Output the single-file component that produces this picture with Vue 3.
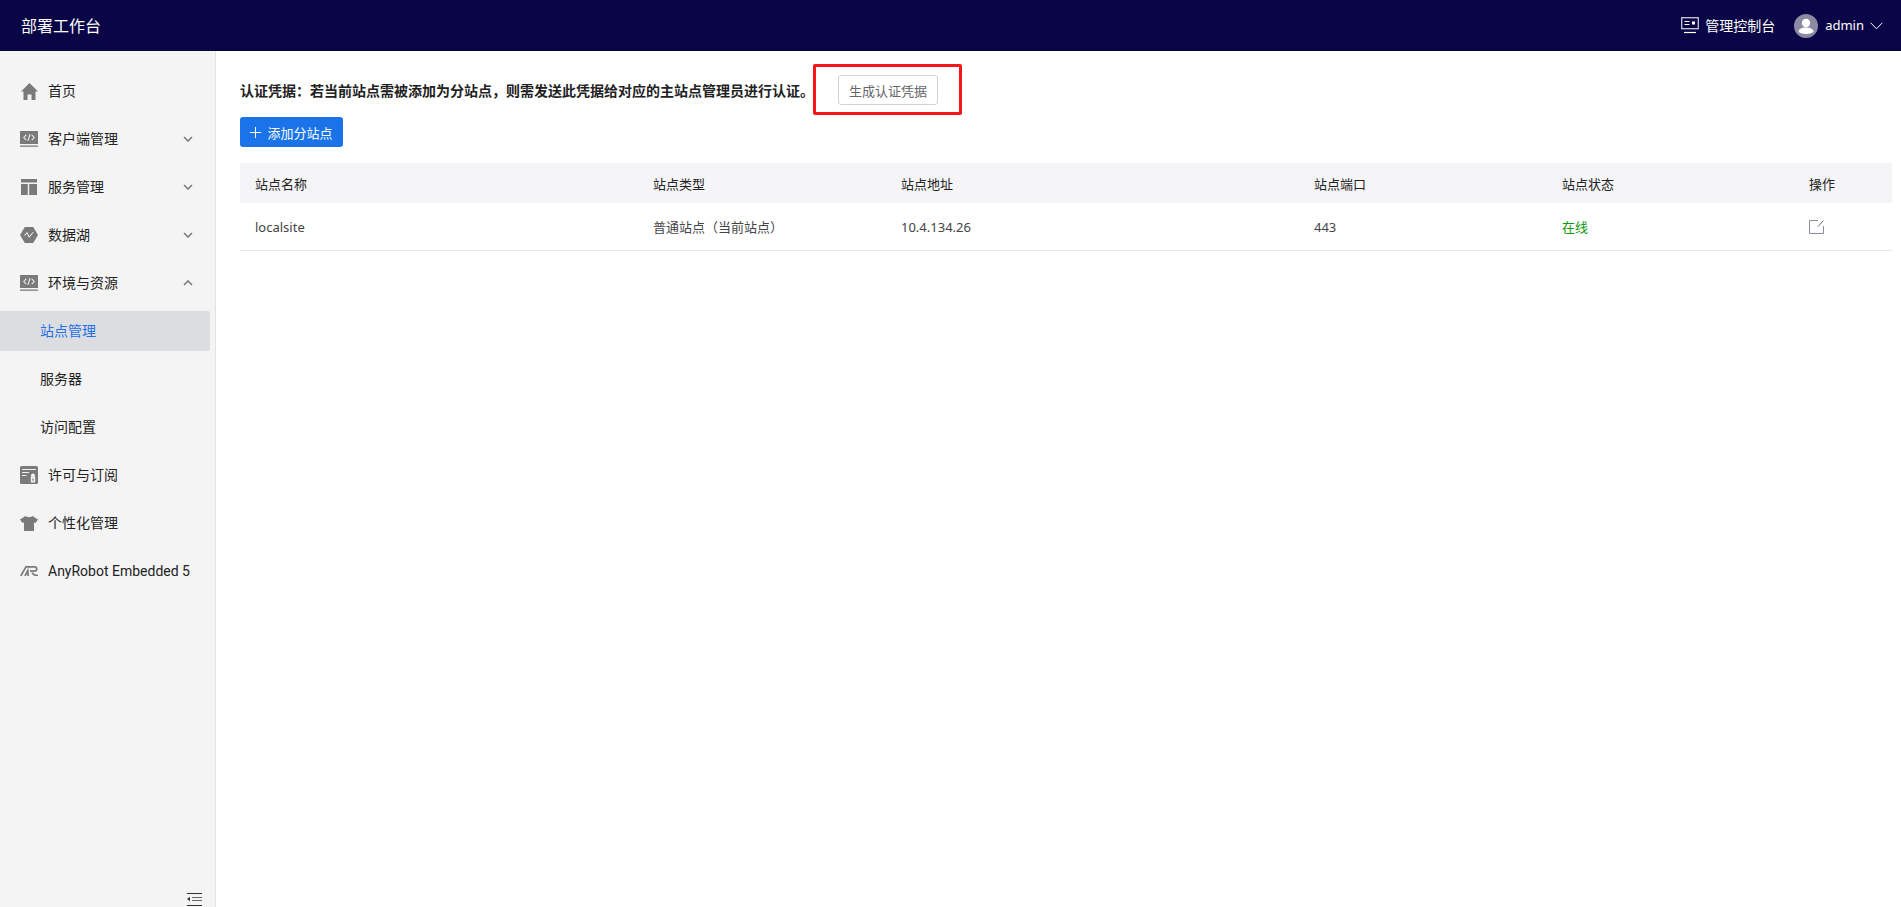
<script setup>
const menu = [
  { label: '首页', icon: 'home' },
  { label: '客户端管理', icon: 'code', arrow: 'down' },
  { label: '服务管理', icon: 'layout', arrow: 'down' },
  { label: '数据湖', icon: 'hex', arrow: 'down' },
  { label: '环境与资源', icon: 'code', arrow: 'up' },
  { label: '站点管理', sub: true, active: true },
  { label: '服务器', sub: true },
  { label: '访问配置', sub: true },
  { label: '许可与订阅', icon: 'license' },
  { label: '个性化管理', icon: 'shirt' },
  { label: 'AnyRobot Embedded 5', icon: 'ar', latin: true },
]

const columns = [
  { title: '站点名称', width: '398px' },
  { title: '站点类型', width: '248px' },
  { title: '站点地址', width: '413px' },
  { title: '站点端口', width: '248px' },
  { title: '站点状态', width: '247px' },
  { title: '操作', width: 'auto' },
]
</script>

<template>
  <div class="page">
    <header class="topbar">
      <div class="brand">部署工作台</div>
      <div class="top-right">
        <div class="console">
          <svg width="18" height="17" viewBox="0 0 18 17" fill="none" stroke="#fff">
            <rect x=".7" y=".7" width="16.600" height="11" stroke="#c9c9d6" stroke-width="1.300" />
            <path d="M3.500 4.500h5M3.500 7.500h5" stroke-width="1.100" />
            <rect x="11" y="4.500" width="3" height="3" fill="#fff" stroke="none" />
            <path d="M3 15.500h12" stroke-width="1.200" />
          </svg>
          <span>管理控制台</span>
        </div>
        <div class="user">
          <svg width="24" height="24" viewBox="0 0 24 24">
            <circle cx="12" cy="12" r="12" fill="#8a8aa3" />
            <circle cx="12" cy="9" r="4.200" fill="#fff" />
            <path d="M4.500 18c0-3 3-4.500 7.500-4.500s7.500 1.500 7.500 4.500c-1.800 1.300-4.500 2-7.500 2s-5.700-.7-7.500-2z" fill="#fff" />
          </svg>
          <span class="user-name">admin</span>
          <svg width="13" height="8" viewBox="0 0 13 8" fill="none" stroke="#fff" stroke-width="1">
            <path d="M.7.800l5.800 6 5.800-6" />
          </svg>
        </div>
      </div>
    </header>

    <div class="body">
      <aside class="sidebar">
        <nav class="menu">
          <div
            v-for="item in menu"
            :key="item.label"
            class="menu-item"
            :class="{ sub: item.sub, active: item.active }"
          >
            <span v-if="item.icon" class="menu-icon">
              <svg v-if="item.icon === 'home'" width="17" height="17" viewBox="0 0 17 17" fill="#7a7a7a">
                <path d="M8.500 0L0 8.500h2.500V17h4v-5.500h4V17h4V8.500H17z" />
              </svg>
              <svg v-else-if="item.icon === 'code'" width="18" height="16" viewBox="0 0 18 16">
                <rect width="18" height="13" fill="#7a7a7a" />
                <rect y="14.500" width="18" height="1.300" fill="#7a7a7a" />
                <path d="M6.300 3.800L3.800 6.500l2.500 2.700M11.700 3.800l2.500 2.700-2.500 2.700M10 3.200L8 9.800" fill="none" stroke="#f0f0f0" stroke-width="1.100" />
              </svg>
              <svg v-else-if="item.icon === 'layout'" width="16" height="16" viewBox="0 0 16 16" fill="#7a7a7a">
                <rect width="16" height="3.500" />
                <rect y="5" width="6.800" height="11" />
                <rect x="8.200" y="5" width="7.800" height="11" />
              </svg>
              <svg v-else-if="item.icon === 'hex'" width="18" height="16" viewBox="0 0 18 16">
                <path d="M4.800 0h8.400L18 8l-4.800 8H4.800L0 8z" fill="#7a7a7a" />
                <path d="M4.500 8.600l2.500-3 2.200 4.600 4-5" fill="none" stroke="#fff" stroke-width="1" />
              </svg>
              <svg v-else-if="item.icon === 'license'" width="18" height="18" viewBox="0 0 18 18">
                <rect width="18" height="18" rx="1.500" fill="#7a7a7a" />
                <path d="M2 3.500h14M2 6.500h7M2 9.500h4.500" stroke="#f0f0f0" stroke-width="1" />
                <circle cx="13" cy="9.500" r="2" fill="#f0f0f0" />
                <rect x="10.800" y="10.500" width="4.400" height="6" fill="#f0f0f0" />
                <rect x="12.400" y="12.500" width="1.200" height="2.200" fill="#7a7a7a" />
              </svg>
              <svg v-else-if="item.icon === 'shirt'" width="18" height="15" viewBox="0 0 18 15" fill="#7a7a7a">
                <path d="M5.500 0C6.500 1.500 11.500 1.500 12.500 0L18 3.500l-2.500 3.500-1.500-.8V15H4V6.200L2.500 7 0 3.500z" />
              </svg>
              <svg v-else width="18" height="10" viewBox="0 0 18 10" fill="none" stroke="#7a7a7a" stroke-width="1.700">
                <path d="M.7 10L6 .9h8.500c3 0 3 4.300 0 4.300H10" />
                <path d="M5 10l2.800-5.500.4 5.500" />
                <path d="M12 7l3 2.300h3" />
              </svg>
            </span>
            <span class="menu-label" :class="{ latin: item.latin }">{{ item.label }}</span>
            <svg
              v-if="item.arrow"
              class="arrow"
              :class="{ up: item.arrow === 'up' }"
              width="10"
              height="6"
              viewBox="0 0 10 6"
              fill="none"
              stroke="#7a7a7a"
              stroke-width="1.600"
            >
              <path d="M1 1l4 4 4-4" />
            </svg>
          </div>
        </nav>
        <div class="collapse">
          <svg width="15" height="13" viewBox="0 0 15 13" fill="#333">
            <rect width="15" height="1" y="0" />
            <rect x="5" y="4" width="10" height="1" fill="#666" />
            <rect x="5" y="7" width="10" height="1" fill="#666" />
            <rect y="12" width="15" height="1" />
            <path d="M3 3.800v4.400L0 6z" />
          </svg>
        </div>
      </aside>

      <main class="content">
        <div class="cred-row">
          <span class="cred-text">认证凭据：若当前站点需被添加为分站点，则需发送此凭据给对应的主站点管理员进行认证。</span>
          <div class="cred-btn-wrap">
            <button class="cred-btn">生成认证凭据</button>
            <div class="annotation"></div>
          </div>
        </div>

        <button class="add-btn">
          <svg width="11" height="11" viewBox="0 0 11 11" stroke="#fff" stroke-width="1">
            <path d="M5.500 0v11M0 5.500h11" />
          </svg>
          <span>添加分站点</span>
        </button>

        <table class="table">
          <colgroup>
            <col v-for="c in columns" :key="c.title" :style="{ width: c.width }" />
          </colgroup>
          <thead>
            <tr>
              <th v-for="c in columns" :key="c.title">{{ c.title }}</th>
            </tr>
          </thead>
          <tbody>
            <tr>
              <td>localsite</td>
              <td>普通站点（当前站点）</td>
              <td>10.4.134.26</td>
              <td>443</td>
              <td class="online">在线</td>
              <td>
                <svg class="edit" width="15" height="14" viewBox="0 0 15 14" fill="none">
                  <path d="M9 .5H.5v13h14V6" stroke="#8d8d99" stroke-width="1" />
                  <path d="M9 6.500L14.500 .5" stroke="#6a6a78" stroke-width="1" />
                </svg>
              </td>
            </tr>
          </tbody>
        </table>
      </main>
    </div>
  </div>
</template>

<style scoped>
.page {
  width: 1901px;
  height: 907px;
  display: flex;
  flex-direction: column;
  overflow: hidden;
  background: #fff;
  color: #333;
  font-family: "Noto Sans", "Noto Sans CJK SC", sans-serif;
  font-size: 13px;
}
.topbar {
  height: 51px;
  flex-shrink: 0;
  box-sizing: border-box;
  background: #0a0546;
  color: #fff;
  display: flex;
  align-items: center;
  justify-content: space-between;
  padding: 0 18px 0 21px;
}
.brand {
  font-size: 16px;
  padding-bottom: 2px;
}
.top-right {
  display: flex;
  align-items: center;
  gap: 19px;
}
.console {
  display: flex;
  align-items: center;
  gap: 6px;
  font-size: 14px;
}
.console span {
  padding-bottom: 2px;
}
.user {
  display: flex;
  align-items: center;
}
.user-name {
  margin: 0 6px 0 7px;
  padding-bottom: 2px;
}
.body {
  flex: 1;
  display: flex;
  min-height: 0;
}
.sidebar {
  width: 216px;
  flex-shrink: 0;
  background: #f4f4f4;
  border-right: 1px solid #e2e2e2;
  box-sizing: border-box;
  display: flex;
  flex-direction: column;
  justify-content: space-between;
}
.menu {
  padding: 20px 5px 0 0;
  display: flex;
  flex-direction: column;
  gap: 8px;
}
.menu-item {
  height: 40px;
  display: flex;
  align-items: center;
  padding-left: 20px;
  color: #222;
  border-radius: 0 2px 2px 0;
  font-family: Roboto, "Noto Sans CJK SC", sans-serif;
  font-size: 14px;
}
.menu-item.sub {
  padding-left: 40px;
}
.menu-item.active {
  background: #dcdde1;
  color: #1f6fe5;
}
.menu-icon {
  width: 18px;
  margin-right: 10px;
  display: flex;
  align-items: center;
  justify-content: center;
}
.menu-label {
  flex: 1;
  white-space: nowrap;
  padding-bottom: 2px;
}
.menu-label.latin {
  padding-bottom: 0;
}
.arrow {
  margin-right: 17px;
}
.arrow.up {
  transform: rotate(180deg);
}
.collapse {
  display: flex;
  justify-content: flex-end;
  padding: 0 13px 0 0;
  height: 13px;
  margin-bottom: 1px;
}
.content {
  flex: 1;
  padding: 24px 9px 0 24px;
  min-width: 0;
}
.cred-row {
  display: flex;
  align-items: center;
  height: 30px;
}
.cred-text {
  font-weight: 700;
  font-size: 14px;
  white-space: nowrap;
  width: 598px;
  color: #222;
}
.cred-btn-wrap {
  position: relative;
}
.cred-btn {
  display: block;
  width: 100px;
  height: 30px;
  box-sizing: border-box;
  background: #fff;
  border: 1px solid #d4d4d8;
  border-radius: 3px;
  color: #666;
  font: inherit;
  padding: 0;
}
.annotation {
  position: absolute;
  left: -25px;
  top: -11px;
  width: 149px;
  height: 51px;
  box-sizing: border-box;
  border: 3px solid #f5171a;
  border-radius: 2px;
}
.add-btn {
  margin-top: 12px;
  width: 103px;
  height: 30px;
  background: #1a73e8;
  border: none;
  border-radius: 3px;
  color: #fff;
  font: inherit;
  display: flex;
  align-items: center;
  justify-content: center;
  gap: 6px;
  padding: 0;
}
.table {
  margin-top: 16px;
  width: 1652px;
  border-collapse: collapse;
  table-layout: fixed;
}
th {
  height: 40px;
  background: #f5f5f7;
  font-weight: 400;
  text-align: left;
  padding: 0 15px;
  color: #222;
}
td {
  height: 47px;
  padding: 0 15px;
  border-bottom: 1px solid #e8e8e8;
  color: #444;
}
.online {
  color: #0a9a0a;
}
.edit {
  display: block;
}
</style>

<style>
html, body {
  margin: 0;
  background: #fff;
}
</style>
